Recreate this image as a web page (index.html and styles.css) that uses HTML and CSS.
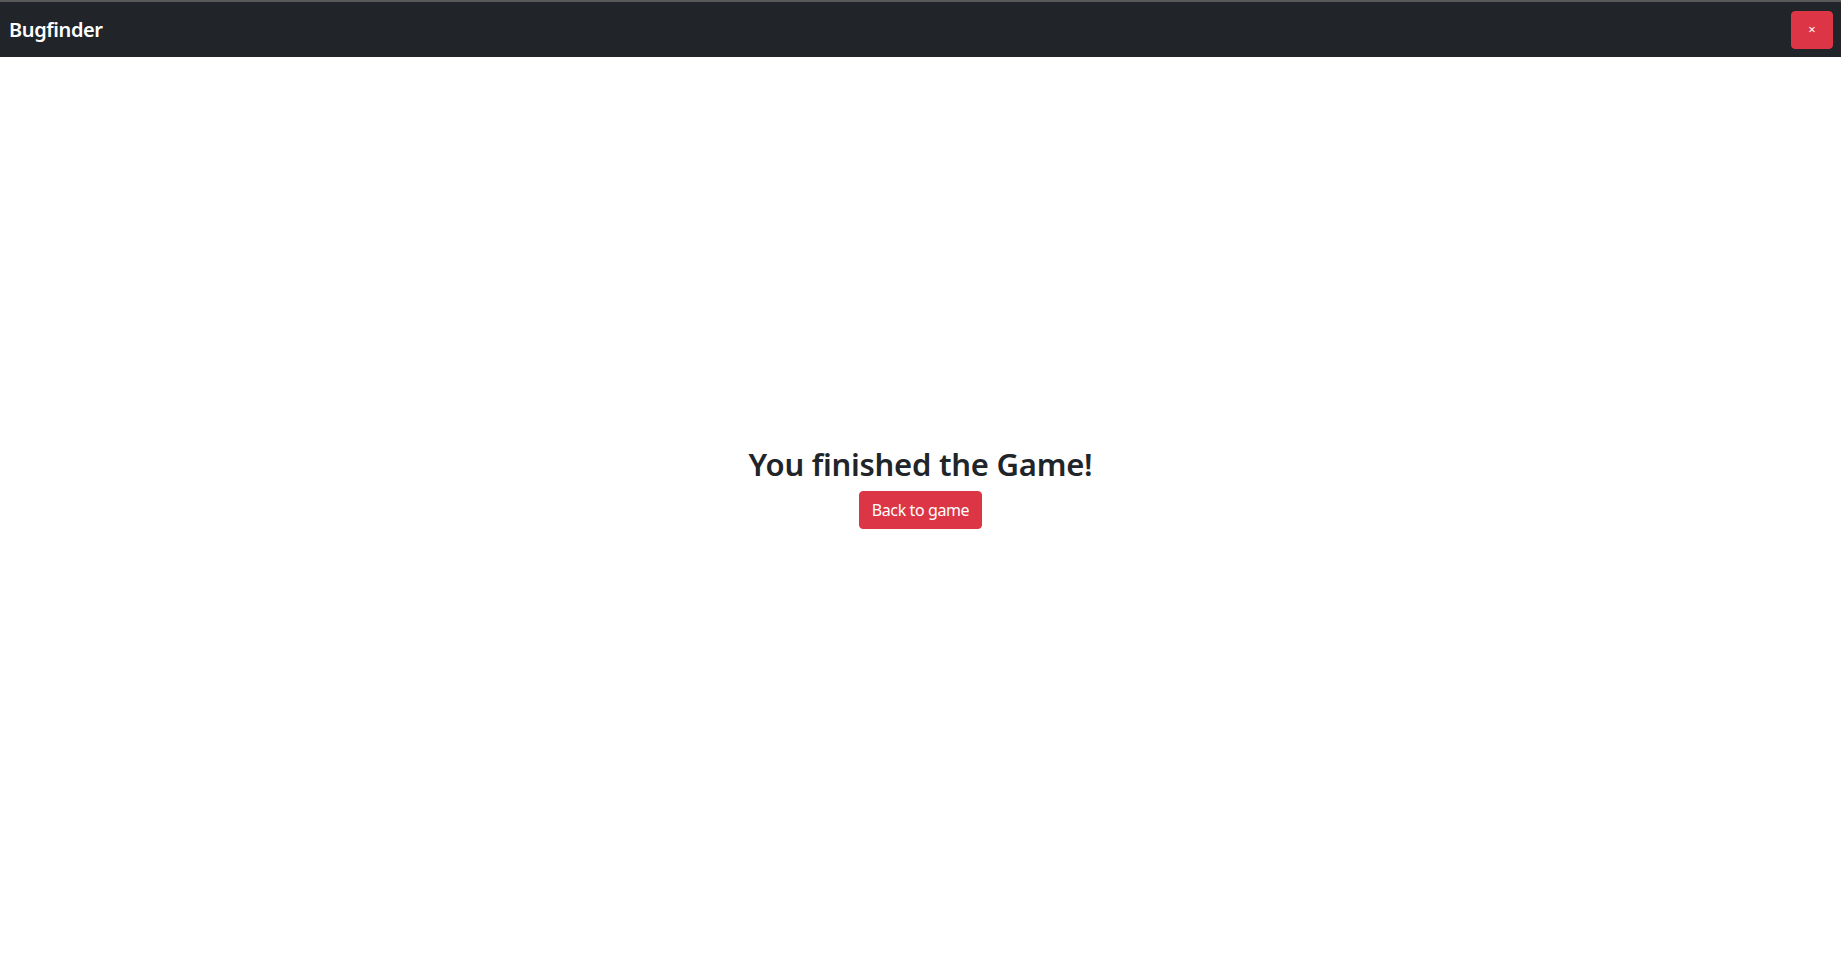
FILE: index.html
```html
<!DOCTYPE html>
<html lang="en">
<head>
<meta charset="utf-8">
<title>Bugfinder</title>
<link rel="stylesheet" href="styles.css">
</head>
<body>
<div class="topline"></div>
<nav class="navbar">
  <span class="brand">Bugfinder</span>
  <button class="btn btn-close" type="button">&#215;</button>
</nav>
<main class="content">
  <h2 class="title">You finished the Game!</h2>
  <button class="btn btn-danger" type="button">Back to game</button>
</main>
</body>
</html>
```
FILE: styles.css
```css
* { box-sizing: border-box; }
html, body { margin: 0; padding: 0; height: 100%; }
body {
  font-family: "Noto Sans", "Open Sans", sans-serif;
  color: #212529;
  background: #fff;
  display: flex;
  flex-direction: column;
  min-height: 100vh;
}
.topline { height: 2px; background: #595959; flex: none; }
.navbar {
  flex: none;
  height: 55px;
  background: #212529;
  display: flex;
  align-items: center;
  justify-content: space-between;
  padding: 0 8px 0 9px;
}
.brand {
  color: #fff;
  font-size: 20px;
  font-weight: 600;
  letter-spacing: -0.4px;
}
.btn {
  font-family: inherit;
  border: 1px solid #dc3545;
  background: #dc3545;
  color: #fff;
  border-radius: 4px;
  cursor: pointer;
}
.btn-close {
  width: 42px;
  height: 38px;
  font-size: 13px;
  line-height: 1;
  padding: 0;
}
.content {
  flex: 1;
  display: flex;
  flex-direction: column;
  align-items: center;
  justify-content: center;
  padding-bottom: 51px;
}
.title {
  margin: 0 0 8px;
  font-size: 31px;
  font-weight: 600;
  line-height: 1.2;
  letter-spacing: -0.25px;
}
.btn-danger {
  font-size: 16px;
  line-height: 1.5;
  padding: 6px 12px;
  height: 38px;
  letter-spacing: -0.4px;
}
```
